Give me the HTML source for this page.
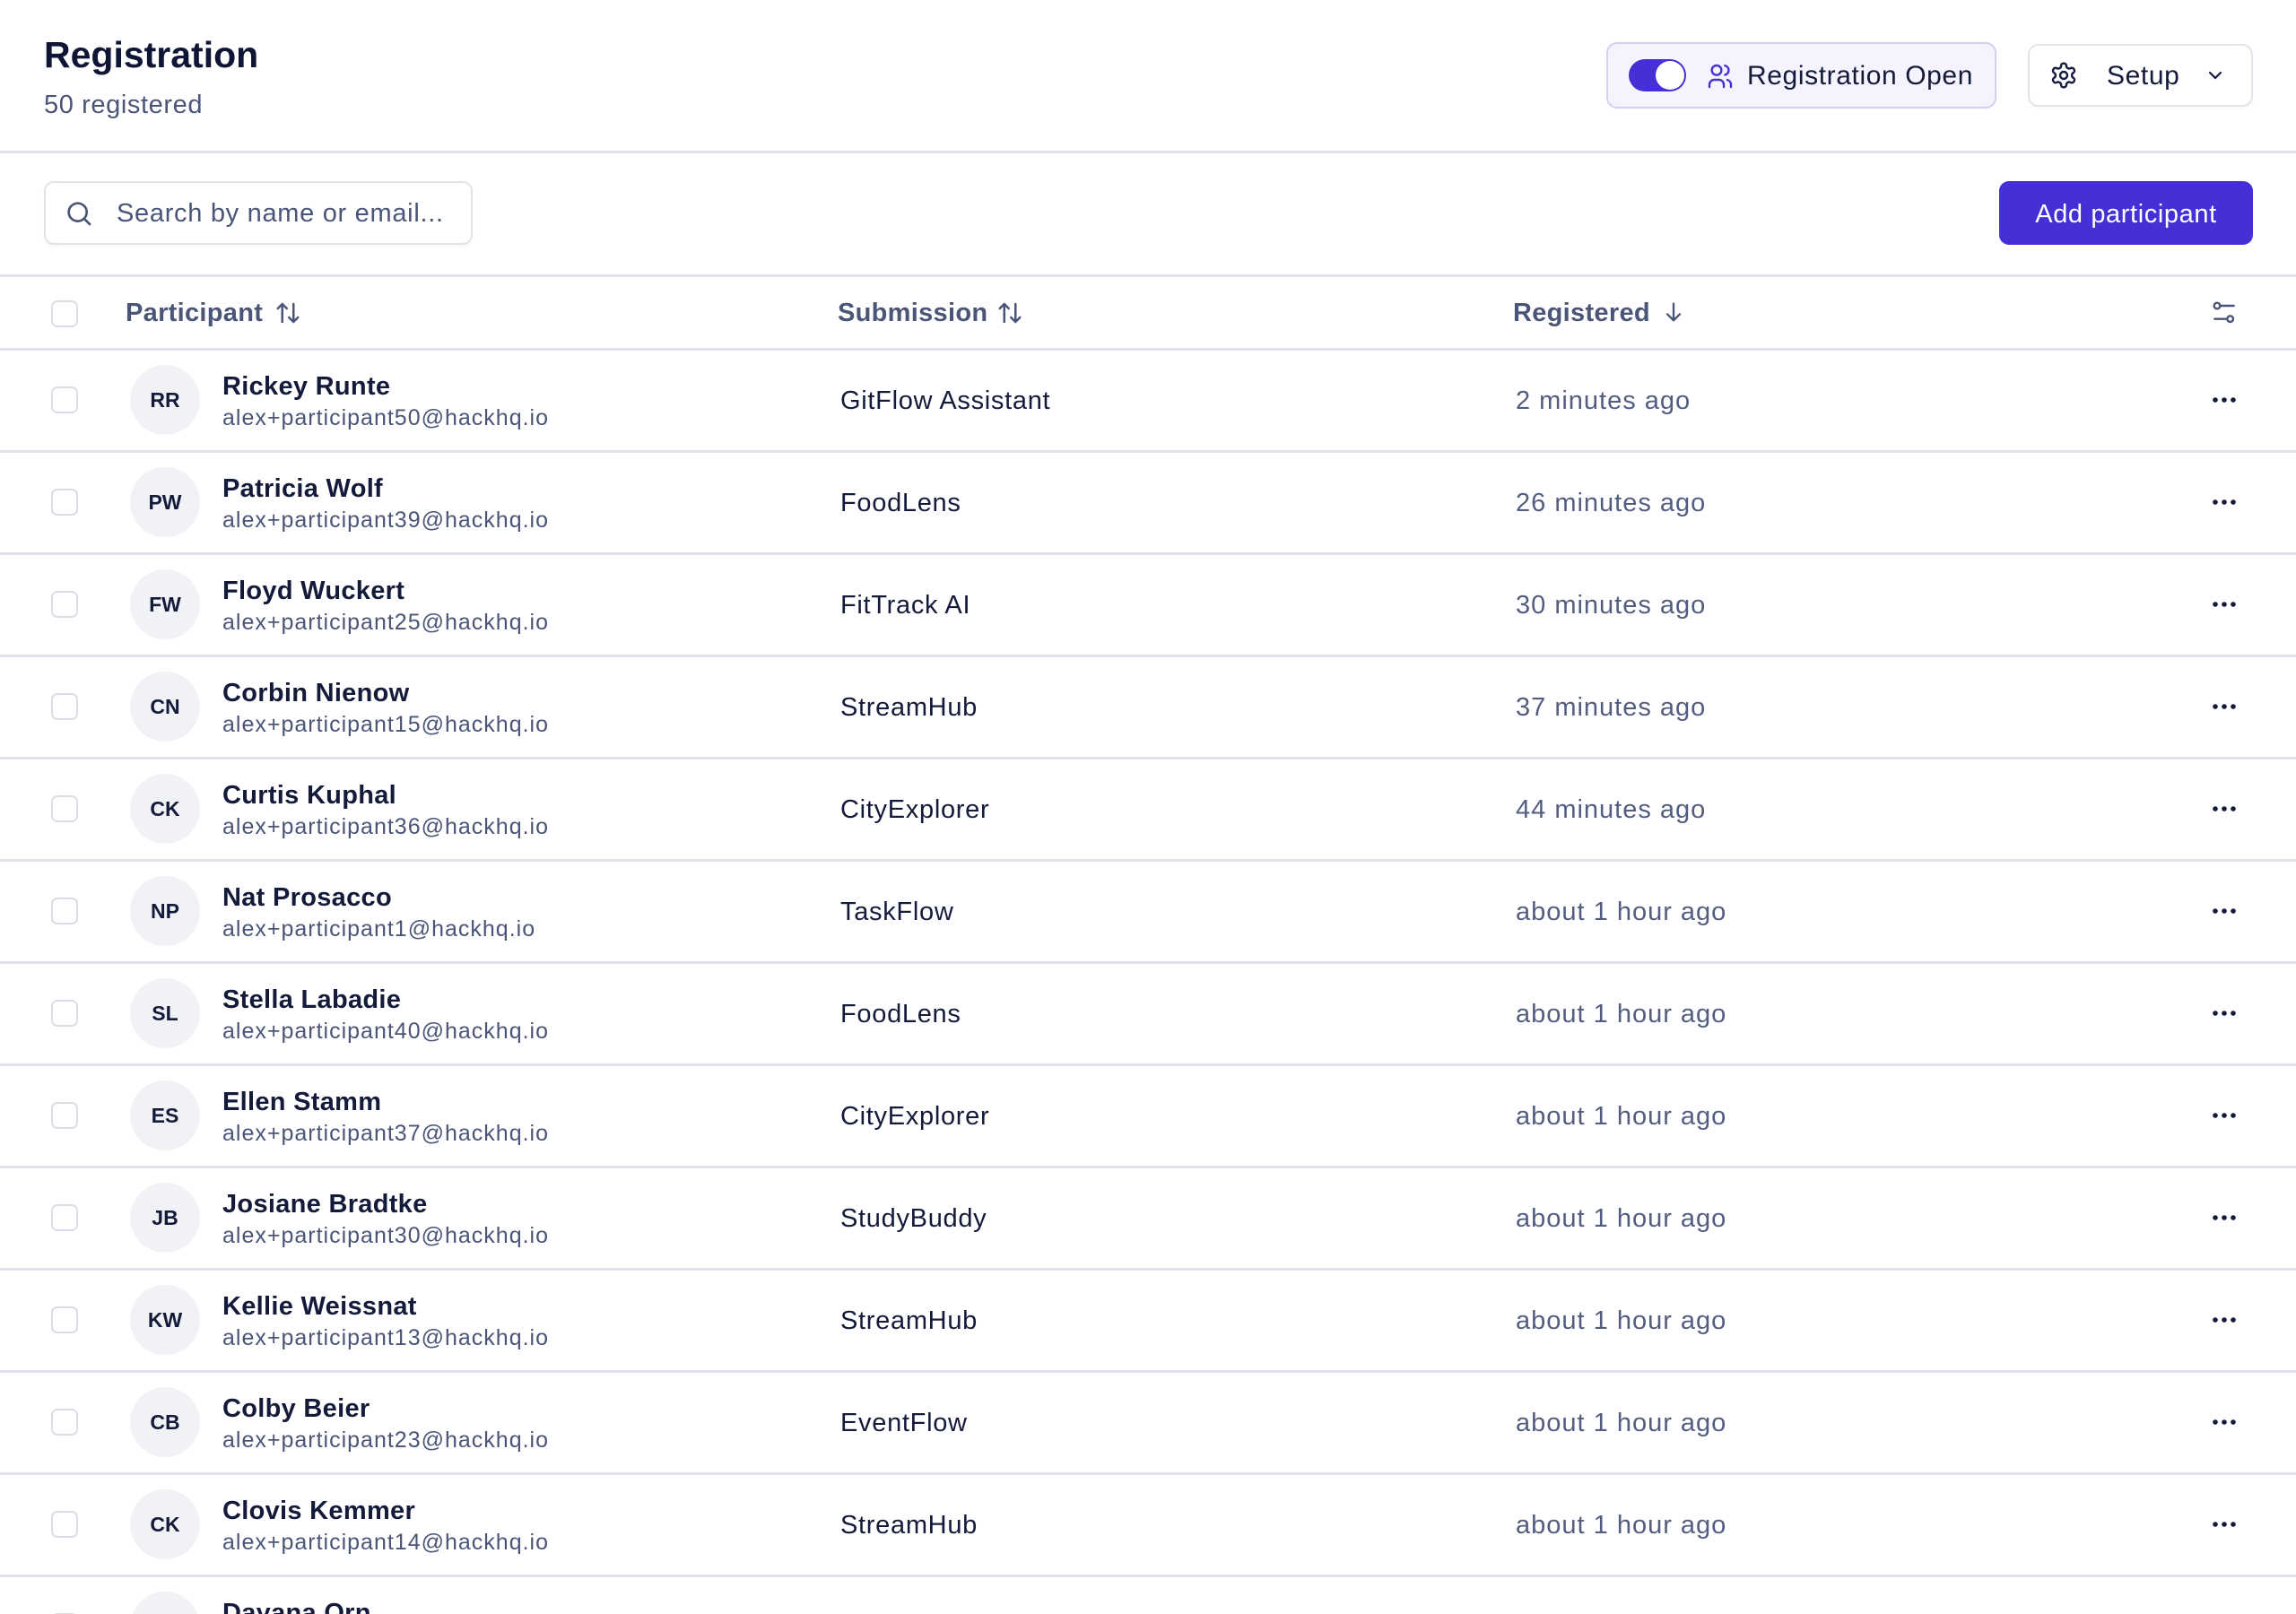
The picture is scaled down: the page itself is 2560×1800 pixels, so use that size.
<!DOCTYPE html>
<html style="width:2560px;height:1800px;overflow:hidden"><head><meta charset="utf-8"><style>
*{box-sizing:border-box;margin:0;padding:0}
body{width:2560px;height:1800px;overflow:hidden;background:#fff;font-family:"Liberation Sans",sans-serif;color:#141a3a;position:relative}
.a{position:absolute}
.hl{position:absolute;left:0;width:2560px;height:3px;background:#e3e3ec}
.cb{position:absolute;left:57px;width:30px;height:30px;border:2px solid #dcdde6;border-radius:7px;background:#fff}
.av{position:absolute;left:145px;width:78px;height:78px;border-radius:50%;background:#f1f2f6;font-size:23px;font-weight:bold;color:#141a3a;display:flex;align-items:center;justify-content:center}
.nm{position:absolute;left:248px;font-size:29px;font-weight:bold;color:#141a3a;letter-spacing:0.3px}
.em{position:absolute;left:248px;font-size:25px;color:#4a5578;letter-spacing:1px}
.sb{position:absolute;left:937px;font-size:29px;color:#141a3a;letter-spacing:0.7px}
.tm{position:absolute;left:1690px;font-size:29px;color:#535d80;letter-spacing:1px}
.dt{position:absolute;left:2466px;width:28px;height:6px}
.th{position:absolute;top:333px;font-size:29px;font-weight:bold;color:#4a5578;letter-spacing:0.3px}
</style></head><body>
<div class="a" style="left:49px;top:38px;font-size:41px;font-weight:bold;color:#0f1535">Registration</div>
<div class="a" style="left:49px;top:101px;font-size:29px;color:#4a5578;letter-spacing:0.6px">50 registered</div>

<div class="a" style="left:1791px;top:47px;width:435px;height:74px;border:2px solid #d4cff6;border-radius:12px;background:#f4f3fe"></div>
<div class="a" style="left:1816px;top:66px;width:64px;height:36px;border-radius:18px;background:#4530d6"></div>
<div class="a" style="left:1846px;top:68px;width:32px;height:32px;border-radius:50%;background:#fff"></div>
<svg class="a" style="left:1902px;top:69px" width="32" height="32" viewBox="0 0 24 24" fill="none" stroke="#4530d6" stroke-width="1.8" stroke-linecap="round"><circle cx="9" cy="7" r="4"/><path d="M3 21v-2a4 4 0 0 1 4-4h4a4 4 0 0 1 4 4v2"/><path d="M16 3.1a4 4 0 0 1 0 7.8"/><path d="M21 21v-2a4 4 0 0 0-3-3.9"/></svg>
<div class="a" style="left:1948px;top:68px;font-size:30px;color:#141a3a;letter-spacing:0.6px">Registration Open</div>

<div class="a" style="left:2261px;top:49px;width:251px;height:70px;border:2px solid #e3e3ec;border-radius:12px;background:#fff;box-shadow:0 2px 3px rgba(0,0,0,0.04)"></div>
<svg class="a" style="left:2285px;top:68px" width="32" height="32" viewBox="0 0 24 24" fill="none" stroke="#141a3a" stroke-width="1.8"><path d="M12.22 2h-.44a2 2 0 0 0-2 2v.18a2 2 0 0 1-1 1.730l-.43.25a2 2 0 0 1-2 0l-.15-.08a2 2 0 0 0-2.73.73l-.22.38a2 2 0 0 0 .73 2.73l.15.1a2 2 0 0 1 1 1.72v.51a2 2 0 0 1-1 1.74l-.15.09a2 2 0 0 0-.73 2.73l.22.38a2 2 0 0 0 2.73.73l.15-.08a2 2 0 0 1 2 0l.43.25a2 2 0 0 1 1 1.73V20a2 2 0 0 0 2 2h.44a2 2 0 0 0 2-2v-.18a2 2 0 0 1 1-1.73l.43-.25a2 2 0 0 1 2 0l.15.08a2 2 0 0 0 2.73-.73l.22-.39a2 2 0 0 0-.73-2.73l-.15-.08a2 2 0 0 1-1-1.74v-.5a2 2 0 0 1 1-1.74l.15-.09a2 2 0 0 0 .73-2.73l-.22-.38a2 2 0 0 0-2.73-.73l-.15.08a2 2 0 0 1-2 0l-.43-.25a2 2 0 0 1-1-1.73V4a2 2 0 0 0-2-2z"/><circle cx="12" cy="12" r="3"/></svg>
<div class="a" style="left:2349px;top:68px;font-size:30px;color:#141a3a;letter-spacing:0.6px">Setup</div>
<svg class="a" style="left:2458px;top:72px" width="24" height="24" viewBox="0 0 24 24" fill="none" stroke="#141a3a" stroke-width="2.2" stroke-linecap="round"><path d="M6 9l6 6 6-6"/></svg>

<div class="hl" style="top:168px"></div>

<div class="a" style="left:49px;top:202px;width:478px;height:71px;border:2px solid #e1e2ea;border-radius:11px;box-shadow:0 2px 3px rgba(0,0,0,0.04)"></div>
<svg class="a" style="left:72px;top:222px" width="32" height="32" viewBox="0 0 24 24" fill="none" stroke="#4a5578" stroke-width="2" stroke-linecap="round"><circle cx="11" cy="11" r="7.5"/><path d="M21 21l-4.3-4.3"/></svg>
<div class="a" style="left:130px;top:222px;font-size:29px;color:#4a5578;letter-spacing:0.7px">Search by name or email...</div>

<div class="a" style="left:2229px;top:202px;width:283px;height:71px;border-radius:11px;background:#4530d6;color:#fff;font-size:29px;display:flex;align-items:center;justify-content:center;letter-spacing:0.6px;padding-top:3px">Add participant</div>

<div class="hl" style="top:306px"></div>
<div class="cb" style="top:335px"></div>
<div class="th" style="left:140px">Participant</div>
<svg class="a" style="left:306px;top:334px" width="30" height="30" viewBox="0 0 24 24" fill="none" stroke="#4a5578" stroke-width="2" stroke-linecap="round" stroke-linejoin="round"><path d="M7 20V4M3 8l4-4 4 4M17 4v16M13 16l4 4 4-4"/></svg>
<div class="th" style="left:934px">Submission</div>
<svg class="a" style="left:1111px;top:334px" width="30" height="30" viewBox="0 0 24 24" fill="none" stroke="#4a5578" stroke-width="2" stroke-linecap="round" stroke-linejoin="round"><path d="M7 20V4M3 8l4-4 4 4M17 4v16M13 16l4 4 4-4"/></svg>
<div class="th" style="left:1687px">Registered</div>
<svg class="a" style="left:1852px;top:334px" width="28" height="28" viewBox="0 0 24 24" fill="none" stroke="#4a5578" stroke-width="2" stroke-linecap="round" stroke-linejoin="round"><path d="M12 4v16M6 14l6 6 6-6"/></svg>
<svg class="a" style="left:2464px;top:333px" width="32" height="32" viewBox="0 0 24 24" fill="none" stroke="#4a5578" stroke-width="1.8" stroke-linecap="round"><circle cx="6" cy="6" r="2.5"/><path d="M8.5 6H20"/><circle cx="17" cy="17" r="2.5"/><path d="M4 17h10.5"/></svg>
<div class="hl" style="top:388px"></div>

<div id="rows"></div>
<script>
var d=[["RR","Rickey Runte","alex+participant50@hackhq.io","GitFlow Assistant","2 minutes ago"],
["PW","Patricia Wolf","alex+participant39@hackhq.io","FoodLens","26 minutes ago"],
["FW","Floyd Wuckert","alex+participant25@hackhq.io","FitTrack AI","30 minutes ago"],
["CN","Corbin Nienow","alex+participant15@hackhq.io","StreamHub","37 minutes ago"],
["CK","Curtis Kuphal","alex+participant36@hackhq.io","CityExplorer","44 minutes ago"],
["NP","Nat Prosacco","alex+participant1@hackhq.io","TaskFlow","about 1 hour ago"],
["SL","Stella Labadie","alex+participant40@hackhq.io","FoodLens","about 1 hour ago"],
["ES","Ellen Stamm","alex+participant37@hackhq.io","CityExplorer","about 1 hour ago"],
["JB","Josiane Bradtke","alex+participant30@hackhq.io","StudyBuddy","about 1 hour ago"],
["KW","Kellie Weissnat","alex+participant13@hackhq.io","StreamHub","about 1 hour ago"],
["CB","Colby Beier","alex+participant23@hackhq.io","EventFlow","about 1 hour ago"],
["CK","Clovis Kemmer","alex+participant14@hackhq.io","StreamHub","about 1 hour ago"],
["DO","Dayana Orn","alex+participant9@hackhq.io","FoodLens","about 1 hour ago"]];
var h="";
for(var i=0;i<d.length;i++){var c=446+i*114;var r=d[i];
h+='<div class="cb" style="top:'+(c-15)+'px"></div>';
h+='<div class="av" style="top:'+(c-39)+'px">'+r[0]+'</div>';
h+='<div class="nm" style="top:'+(c-31)+'px">'+r[1]+'</div>';
h+='<div class="em" style="top:'+(c+6)+'px">'+r[2]+'</div>';
h+='<div class="sb" style="top:'+(c-15)+'px">'+r[3]+'</div>';
h+='<div class="tm" style="top:'+(c-15)+'px">'+r[4]+'</div>';
h+='<svg class="dt" style="top:'+(c-3)+'px" viewBox="0 0 28 6"><circle cx="4" cy="3" r="2.8" fill="#141a3a"/><circle cx="14" cy="3" r="2.8" fill="#141a3a"/><circle cx="24" cy="3" r="2.8" fill="#141a3a"/></svg>';
h+='<div class="hl" style="top:'+(c+56)+'px"></div>';}
document.getElementById("rows").innerHTML=h;
</script>
</body></html>
